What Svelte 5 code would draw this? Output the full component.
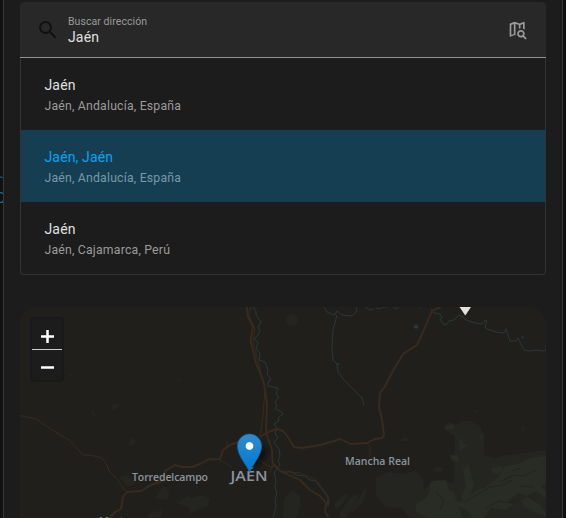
<script>
  let query = $state('Jaén');
  let active = $state(1);
  const results = [
    { name: 'Jaén', place: 'Jaén, Andalucía, España' },
    { name: 'Jaén, Jaén', place: 'Jaén, Andalucía, España' },
    { name: 'Jaén', place: 'Jaén, Cajamarca, Perú' }
  ];
</script>

<div class="page">
  <svg class="behind" width="3" height="30" viewBox="0 0 3 30" fill="none" stroke="#0876ad" stroke-width="1.3">
    <path d="M0 2q2 0 3 1" opacity=".6" /><path d="M0 18q2-1 3 1" /><path d="M0 27q2 1 3-1" />
  </svg>
  <main class="dialog">
    <div class="field">
      <svg class="search" width="24" height="24" viewBox="0 0 24 24">
        <path d="M15.5 14h-.79l-.28-.27A6.47 6.47 0 0 0 16 9.5 6.5 6.5 0 1 0 9.5 16c1.61 0 3.09-.59 4.23-1.57l.27.28v.79l5 4.99L20.49 19l-4.99-5zm-6 0C7.01 14 5 11.99 5 9.5S7.01 5 9.5 5 14 7.01 14 9.5 11.99 14 9.5 14z" />
      </svg>
      <label>
        <span>Buscar dirección</span>
        <input bind:value={query} spellcheck="false" />
      </label>
      <svg class="mapsearch" width="20" height="20" viewBox="0 0 24 24">
        <path d="M15.5 12c2.5 0 4.500 2 4.500 4.500 0 .88-.25 1.710-.69 2.400l3.080 3.100L21 23.390l-3.120-3.070c-.69.43-1.510.68-2.380.68-2.500 0-4.500-2-4.500-4.500s2-4.500 4.500-4.500m0 2a2.500 2.500 0 0 0 0 5 2.500 2.500 0 0 0 0-5M19.500 2a.5.5 0 0 1 .5.5v9.310c-.58-.65-1.250-1.120-2-1.430V4.700l-3 1.160v4.160a6 6 0 0 0-2 .48V5.870L9 4.470v12.660c.04.9.2 1.200.3 1.370L8 18.100l-5.340 2.070-.16.03a.5.5 0 0 1-.5-.5V4.600c0-.23.15-.41.36-.48L8 2.200l6 2.100 5.340-2.070zM4 5.860v12.030l3-1.160V4.700z" />
      </svg>
    </div>
    <ul class="results">
      {#each results as result, i}
        <li class:active={i === active}>
          <button onclick={() => (active = i)}>
            <span class="name">{result.name}</span>
            <span class="place">{result.place}</span>
          </button>
        </li>
      {/each}
    </ul>

    <section class="map">
      <svg class="tiles" width="526" height="211" viewBox="20 307 526 211">
        <defs>
          <linearGradient id="pin" x1="0" y1="0" x2="0" y2="1">
            <stop offset="0" stop-color="#318dcc" /><stop offset=".5" stop-color="#1682d0" /><stop offset="1" stop-color="#0078d3" />
          </linearGradient>
          <filter id="soft" x="-50%" y="-50%" width="200%" height="200%"><feGaussianBlur stdDeviation="3" /></filter>
        </defs>
        <g fill="#242520">
          <path d="M443 428L449 422L457 425L461 421L471 421L480 426L484 436L484 455L495 458L507 455L525 453L546 450V518H410L402 508L386 507L376 496V478L388 472L403 474L415 471L423 479L424 491L431 481L442 480L454 483L454 466L450 456L455 453L455 436L444 429Z" />
          <path d="M340 512l11-15 8-3-4 11-9 13h-6zM190 498l13-3 7 4-2 7-10 3-8 5z" />
          <path d="M284 499l8-9 8 6v10l-4 12h-13zM334 504l12-11 2 1-5 9-7 7zM365 489l2 1-5 14-10 8-4 1z" />
          <path d="M155 498l8-12 6 4-1 9-5 1zM177 503l13-8v13zM149 511l8 1 6-4-2 9h-13zM119 477l9-2 8 8-8 4zM112 405l7-2-3 6-4 1zM129 444l3-8 4 6-5 4zM176 378l6 4-3 1zM68 376l4-2 2 4zM92 410l3 3v4l-3-3z" />
          <circle cx="292" cy="320" r="6" />
          <path d="M401 438h9l-2 3h-6zM521 425l4 4-3 4zM436 467l8 1-3 4-7-1zM472 409l7 2-2 2z" />
        </g>
        <g fill="#292c25">
          <path d="M416 504L424 500L429 494L431 481L446 480L449 490L454 492L456 501L463 502L461 496L466 487L463 470L468 464L471 475L474 483L470 495L478 489L485 488L491 482L498 478L505 466L517 464L530 458L546 456V484L540 486L546 491V498L536 491L526 496L519 493L507 501L514 505L505 510L491 508L484 518H472L467 510L458 506L463 518H427L416 511Z" />
          <path d="M520 499l8-2 12 8 6 7v4l-11-4-10-5zM444 427l9-3 2 4-7 2zM459 442l3-5 1 7 4 1-7 6zM450 455l8 1 1 6-8-3zM491 468l10-2 3 3-7 5-5-2zM479 436l5-2-2 6z" />
        </g>
        <g fill="none" stroke="#23241f" stroke-width="1.2">
          <path d="M486 508l13-7 11 2 14-5M464 502l14-8 12-7 13-2 9-5M500 482l14-7 10 1 12-6M520 486l14 1M512 471l9-3M436 492l8 9-4 9" />
        </g>
        <g class="water">
          <path d="M253 307L256 311L256 315L261 322L258 327L260 331L257 336L254 339L258 342L256 349L260 353L259 360L265 362L268 370L267 374L271 379L268 382L268 386L273 387L278 388L276 394L279 397L275 402L277 406L275 409L280 411L283 414L278 418L279 421L274 424L277 428L275 434L278 437L274 443L279 449L280 456L278 461L280 465L276 470L274 473L276 480L275 487L277 493L275 500L276 507L273 518" />
          <path d="M324 307L327 312L331 314L335 315L337 311L342 315L352 316L357 311L356 307M365 307L370 310L374 309M337 315L333 330L332 350L333 360L337 364L338 372L344 380L353 389L358 394L362 398L364 405" />
          <path d="M376 308L380 309L383 307L388 307M393 307L396 309L399 307M418 307h2M431 309L434 313L440 314L442 317L440 319L443 324L446 325L449 321L454 320L459 315L463 317L466 320L475 323L482 324L485 320L487 321L485 327L487 329L496 332L504 333L506 329L510 341L516 341L518 338L524 350L530 351L536 350L543 351L546 350V345" />
          <path d="M281 471L284 473L290 471L296 475L305 476L310 480L316 481L320 487L325 493L329 500L328 506" />
        </g>
        <g fill="#29383b"><path d="M413 327l3-3 3 3-3 2zM521 337l3-1-1 3zM336 363l5 1-3 1z" /></g>
        <g class="roads">
          <path class="thin" d="M20 415.500l16 3.500 18 12 15 9 14 15 9 .5 10 2.500 5 7 2 6 8 8 8 12" />
          <path d="M109 518L115 512L121 509L123 497L127 492L141 491L149 486L162 481L165 471L170 468L175 465L182 467L192 467L200 464L208 459.500L220 459L223 450L230 445L238 442" />
          <path d="M247 307L248 317L253 327L250.500 340L256 363L264 383L267 403L266 433L272 450L272.500 463L280 471L300 480L310 490L320 496L326 503L325 512L329 518" />
          <path class="thin" d="M251 307L249 314L251 320L255 328L253 342L259 365L262 377L265 390L263 415L260 437M227 442v6M245 448L258 458L267 466L276 467M274 464L269 473M220 460L232 467" />
          <path d="M260 437L268 432L277 429L283 431L288 437L294 447L302 448L320 445L334 441L340 439L351 444L367 443L375 439L382 438L384 435L382 420L379 407L380 393L385 386L394 369L403 354L417 345L423 332L432 311L441 307" />
          <path class="thin" d="M367 443L370 447L370 457M280 471L300 473L315 479L328 495L327 506" />
        </g>
        <path d="M459.500 307h11.500l-5.700 8.500z" fill="#e4e2dd" />
        <g class="labels">
          <text x="132" y="480.600" font-size="10.500" textLength="76">Torredelcampo</text>
          <text x="345" y="465.300" font-size="10.500" textLength="65">Mancha Real</text>
          <text x="230.500" y="481" font-size="13.800" textLength="37" lengthAdjust="spacingAndGlyphs">JAÉN</text>
          <text x="99" y="524.800" font-size="10.500">Martos</text>
        </g>
        <ellipse cx="259" cy="457" rx="4" ry="12" fill="#000" opacity=".65" transform="rotate(35 259 457)" filter="url(#soft)" />
        <path d="M249.500 472c-2-6-12-16-12-26a12 12 0 0 1 24 0c0 10-10 20-12 26z" fill="url(#pin)" stroke="#1769a8" stroke-width=".8" />
        <circle cx="249.500" cy="446" r="4.300" fill="#fff" stroke="#1769a8" stroke-width=".7" />
      </svg>
      <div class="zoom">
        <button aria-label="Acercar"><svg width="13" height="13" viewBox="0 0 13 13"><path d="M0 6.500h13M6.500 0v13" /></svg></button>
        <button aria-label="Alejar"><svg width="13" height="13" viewBox="0 0 13 13"><path d="M0 6.500h13" /></svg></button>
      </div>
    </section>
  </main>
</div>

<style>
  :global(body) { margin: 0; background: #111; }
  .page { position: relative; box-sizing: border-box; width: 566px; height: 518px; padding: 0 3px; overflow: hidden; background: #111; font-family: Roboto, sans-serif; }
  .behind { position: absolute; left: 0; top: 175px; }
  .dialog { box-sizing: border-box; height: 518px; padding: 2px 16px 0; border: solid #393939; border-width: 0 1px; background: #1c1c1c; }
  .field { box-sizing: border-box; display: flex; align-items: center; width: 526px; height: 56px; padding: 0 18px 0 16px; border-bottom: 1px solid #929292; border-radius: 4px 4px 0 0; background: #282828; }
  .search { fill: #111; }
  .mapsearch { fill: #9b9b9b; }
  label { display: flex; flex: 1; flex-direction: column; padding: 2px 0 0 8px; }
  label span { color: #9b9b9b; font-size: 10.500px; line-height: 14px; letter-spacing: .07px; }
  input { width: 300px; height: 18px; margin: -1px 0 1px; padding: 0; border: 0; outline: 0; background: none; color: #e1e1e1; font: 14px/18px Roboto, sans-serif; letter-spacing: .15px; }
  .results { box-sizing: border-box; width: 526px; height: 217px; margin: 0; padding: 0; list-style: none; border: solid #333; border-width: 0 1px 1px; border-radius: 0 0 4px 4px; overflow: hidden; }
  li { height: 72px; }
  li button { display: flex; flex-direction: column; width: 100%; height: 72px; padding: 17px 23.500px 0; border: 0; background: none; text-align: left; font-family: inherit; }
  .name { color: #e1e1e1; font-size: 14px; line-height: 20px; letter-spacing: .15px; }
  .place { color: #9b9b9b; font-size: 12.250px; line-height: 22px; letter-spacing: .2px; }
  .active { background: #153e53; }
  .active .name { color: #03a4f8; }
  .active .place { color: #7799a8; }
  .map { position: relative; width: 526px; height: 211px; margin-top: 32px; border-radius: 16px 16px 0 0; overflow: hidden; background: #211f1c; }
  .tiles { display: block; }
  .water path { fill: none; stroke: #29383b; stroke-width: 1; }
  .roads path { fill: none; stroke: #382b1e; stroke-width: 1.900; stroke-linejoin: round; }
  .roads .thin { stroke-width: 1; }
  .labels { fill: #8b949d; font-family: "Open Sans", sans-serif; font-weight: 600; }
  .zoom { position: absolute; left: 10px; top: 10px; border: 2px solid #191919; border-radius: 4px; background: #1c1c1c; }
  .zoom button { box-sizing: border-box; display: flex; align-items: flex-start; justify-content: center; width: 30px; height: 30px; padding: 10.500px 0 0 1px; border: 0; background: none; }
  .zoom button:first-child { height: 31px; border-bottom: 1px solid #ccc; }
  .zoom button:first-child { padding-top: 11px; }
  .zoom path { stroke: #fff; stroke-width: 2.500; }
</style>
